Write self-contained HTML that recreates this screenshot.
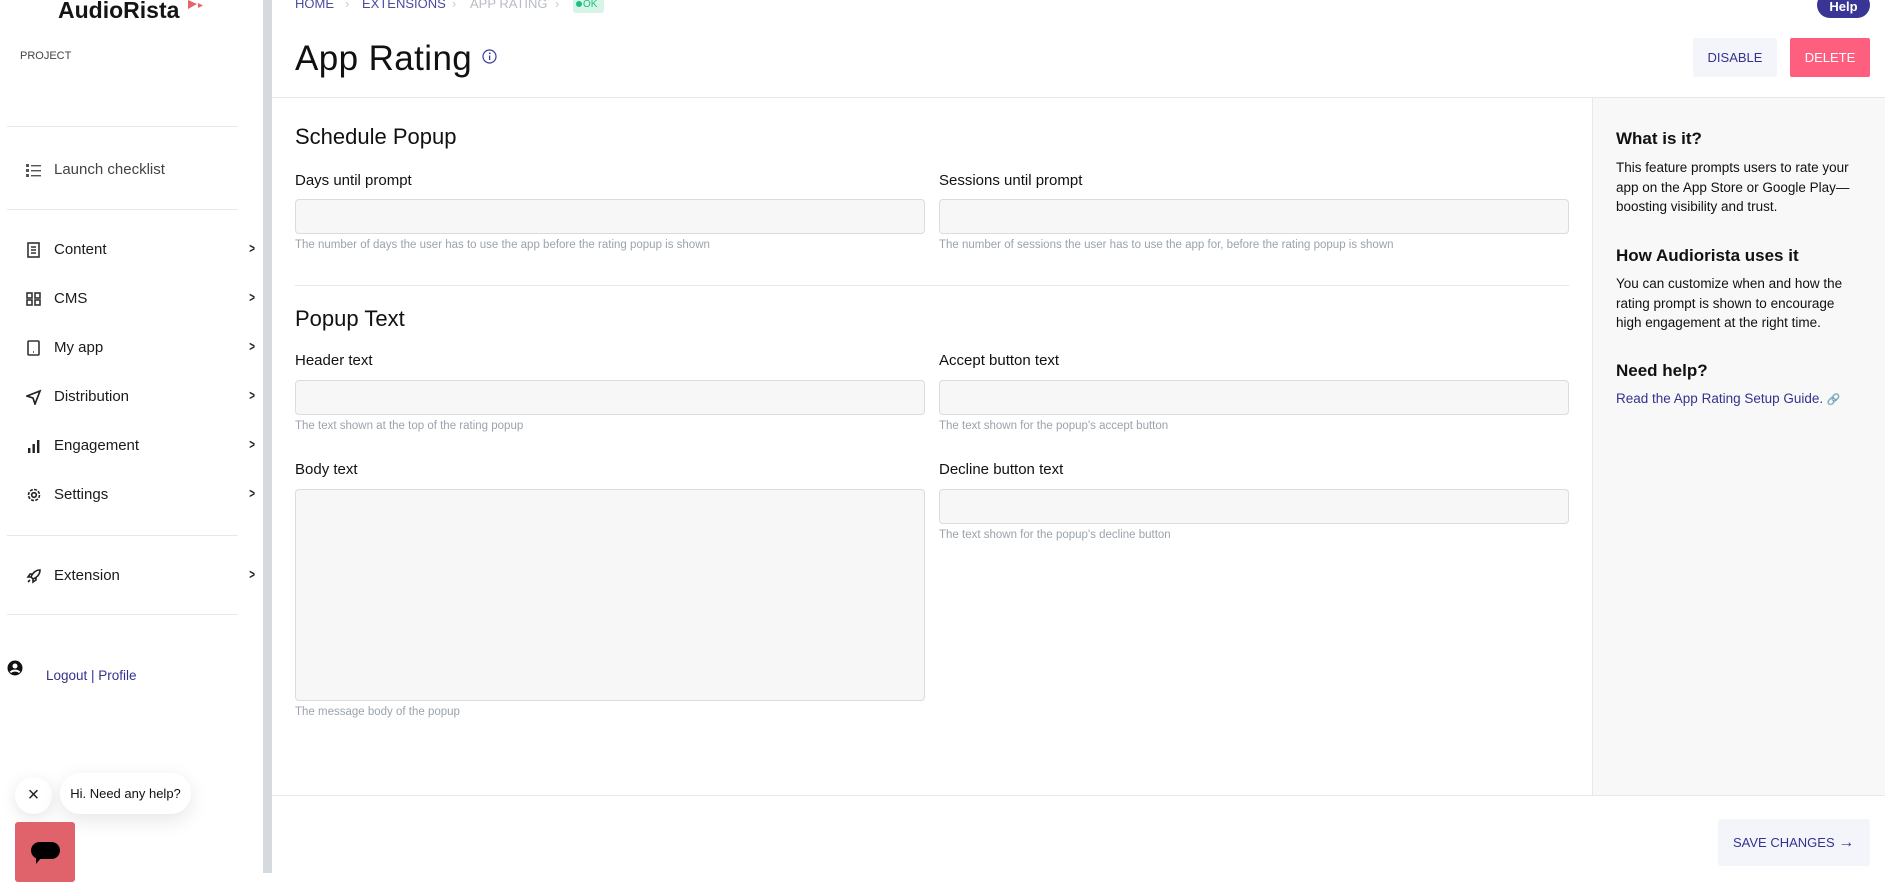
<!DOCTYPE html>
<html><head><meta charset="utf-8"><style>
*{box-sizing:border-box;margin:0;padding:0}
body{width:1885px;height:873px;overflow:hidden;background:#fff;font-family:"Liberation Sans",sans-serif;color:#111;position:relative}
.a{position:absolute;white-space:nowrap}
.hr{position:absolute;height:1px;background:#e6e8eb}
.nav{position:absolute;left:26px;width:236px;height:2px;font-size:15px;color:#1a1a1a;white-space:nowrap}
.nav svg{position:absolute;left:0;top:-8px}
.nav span{position:absolute;left:28px;top:-9px}
.chev{position:absolute;left:222px;font-size:14px;color:#222;top:-10px;transform:scaleX(.7);font-weight:bold}
.lbl{position:absolute;font-size:15px;color:#111}
.inp{position:absolute;background:#f7f7f7;border:1px solid #dcdcdc;border-radius:4px}
.hint{position:absolute;font-size:11.5px;color:#9ba3ab}
.rp h4{position:absolute;left:1616px;font-size:17px;font-weight:bold;color:#111}
.rp p{position:absolute;left:1616px;font-size:13.5px;line-height:19.5px;color:#111;width:238px}
</style></head><body>
<div class="a" style="left:58px;top:-3px;font-size:23px;font-weight:bold;color:#151515">AudioRista</div>
<svg class="a" style="left:188px;top:0" width="18" height="10"><polygon points="0,0 9,4 0,9" fill="#e8636c"/><polygon points="10,3 15,5.5 10,8" fill="#e8636c"/></svg>
<div class="a" style="left:20px;top:50px;font-size:11px;color:#444">PROJECT</div>
<div class="hr" style="left:7px;width:231px;top:126px"></div>
<div class="nav" style="top:170px"><svg width="16" height="16" viewBox="0 0 16 16" fill="#555"><rect x="0" y="2" width="3" height="3"/><rect x="0" y="7" width="3" height="3"/><rect x="0" y="12" width="3" height="3"/><rect x="5" y="3" width="10" height="1.4"/><rect x="5" y="8" width="10" height="1.4"/><rect x="5" y="13" width="10" height="1.4"/></svg><span style="color:#444">Launch checklist</span></div>
<div class="hr" style="left:7px;width:231px;top:209px"></div>
<div class="nav" style="top:250px"><svg width="16" height="16" viewBox="0 0 16 16" fill="none" stroke="#333" stroke-width="1.6"><rect x="2" y="1" width="11" height="14"/><path d="M5 5h5M5 8h5M5 11h5"/></svg><span>Content</span><b class="chev">&gt;</b></div>
<div class="nav" style="top:299px"><svg width="16" height="16" viewBox="0 0 16 16" fill="none" stroke="#333" stroke-width="1.6"><rect x="1" y="2" width="5" height="5"/><rect x="9" y="2" width="5" height="5"/><rect x="1" y="9" width="5" height="5"/><rect x="9" y="9" width="5" height="5"/></svg><span>CMS</span><b class="chev">&gt;</b></div>
<div class="nav" style="top:348px"><svg width="16" height="16" viewBox="0 0 16 16" fill="none" stroke="#333" stroke-width="1.6"><rect x="2" y="1" width="11" height="14" rx="1"/><path d="M7 12h1"/></svg><span>My app</span><b class="chev">&gt;</b></div>
<div class="nav" style="top:397px"><svg width="16" height="16" viewBox="0 0 16 16" fill="none" stroke="#222" stroke-width="1.7"><path d="M1 7L14 2L9 15L7 9Z"/></svg><span>Distribution</span><b class="chev">&gt;</b></div>
<div class="nav" style="top:446px"><svg width="16" height="16" viewBox="0 0 16 16" fill="#222"><rect x="2" y="10" width="2.4" height="5"/><rect x="6.5" y="6" width="2.4" height="9"/><rect x="11" y="2" width="2.4" height="13"/></svg><span>Engagement</span><b class="chev">&gt;</b></div>
<div class="nav" style="top:495px"><svg width="16" height="16" viewBox="0 0 16 16" fill="none" stroke="#222" stroke-width="1.6"><circle cx="8" cy="8" r="5.5" stroke-dasharray="3 1.3"/><circle cx="8" cy="8" r="2.3"/></svg><span>Settings</span><b class="chev">&gt;</b></div>
<div class="hr" style="left:7px;width:231px;top:535px"></div>
<div class="nav" style="top:576px"><svg width="16" height="16" viewBox="0 0 16 16" fill="none" stroke="#222" stroke-width="1.6"><path d="M14 2C9 2 6 6 5 9l2 2c3-1 7-4 7-9zM5 9L2 9 4 6h3M7 11v3l3-2v-3M4 12l-2 2"/></svg><span>Extension</span><b class="chev">&gt;</b></div>
<div class="hr" style="left:7px;width:231px;top:614px"></div>
<svg class="a" style="left:7px;top:660px" width="16" height="16" viewBox="0 0 16 16"><circle cx="8" cy="8" r="7.5" fill="#111"/><circle cx="8" cy="6" r="2.5" fill="#fff"/><path d="M3.5 12.5c1.5-2.5 7.5-2.5 9 0" stroke="#fff" stroke-width="2" fill="none"/></svg>
<div class="a" style="left:46px;top:668px;font-size:13.5px;color:#33338f">Logout | Profile</div>
<div class="a" style="left:15px;top:777px;width:37px;height:37px;border-radius:50%;background:#fff;box-shadow:0 4px 16px rgba(0,0,0,.1);font-size:20px;text-align:center;line-height:36px;color:#222">×</div>
<div class="a" style="left:60px;top:773px;width:131px;height:41px;border-radius:20px;background:#fff;box-shadow:0 6px 20px rgba(0,0,0,.1);font-size:13px;line-height:41px;text-align:center;color:#111">Hi. Need any help?</div>
<div class="a" style="left:15px;top:822px;width:60px;height:60px;background:#e0636b;border-radius:3px"><div style="position:absolute;left:16px;top:20px;width:29px;height:17px;background:#000;border-radius:9px"></div><div style="position:absolute;left:21px;top:36px;border-top:6px solid #000;border-right:5px solid transparent"></div></div>
<div class="a" style="left:263px;top:0;width:9px;height:873px;background:#d6d9dd"></div>
<div class="a" style="left:295px;top:-4px;font-size:13px;color:#4a4aa0">HOME</div>
<div class="a" style="left:345px;top:-4px;font-size:13px;color:#ccc">›</div>
<div class="a" style="left:362px;top:-4px;font-size:13px;color:#4a4aa0">EXTENSIONS</div>
<div class="a" style="left:452px;top:-4px;font-size:13px;color:#ccc">›</div>
<div class="a" style="left:470px;top:-4px;font-size:13px;color:#b8bcc4">APP RATING</div>
<div class="a" style="left:555px;top:-4px;font-size:13px;color:#ccc">›</div>
<div class="a" style="left:573px;top:-3px;width:31px;height:16px;background:#d6f5e8;border-radius:3px;font-size:10px;color:#1dbf7a;line-height:16px;padding-left:3px"><span style="display:inline-block;width:6px;height:6px;border-radius:50%;background:#1dbf7a;margin-right:1px"></span>OK</div>
<div class="a" style="left:1817px;top:-8px;width:53px;height:26px;background:#393594;border-radius:13px;color:#fff;font-size:13px;font-weight:bold;text-align:center;line-height:30px">Help</div>
<div class="a" style="left:295px;top:39px;font-size:35px;color:#111;letter-spacing:.4px">App Rating</div>
<svg class="a" style="left:482px;top:49px" width="15" height="15" viewBox="0 0 15 15"><circle cx="7.5" cy="7.5" r="6.5" fill="none" stroke="#3b3a9a" stroke-width="1.2"/><circle cx="7.8" cy="4.3" r=".9" fill="#3b3a9a"/><path d="M7.6 6.5v4.5" stroke="#3b3a9a" stroke-width="1.3"/></svg>
<div class="a" style="left:1693px;top:38px;width:84px;height:39px;background:#f4f5fa;border-radius:2px;color:#33338f;font-size:13px;text-align:center;line-height:39px">DISABLE</div>
<div class="a" style="left:1790px;top:38px;width:80px;height:39px;background:#fe5f7f;border-radius:2px;color:#fff;font-size:13px;text-align:center;line-height:39px">DELETE</div>
<div class="hr" style="left:272px;width:1613px;top:97px"></div>
<div class="a" style="left:1592px;top:98px;width:293px;height:697px;background:#f8f8f8;border-left:1px solid #e8e8e8"></div>
<div class="rp">
<h4 style="top:129px">What is it?</h4>
<p style="top:158px">This feature prompts users to rate your app on the App Store or Google Play—boosting visibility and trust.</p>
<h4 style="top:246px">How Audiorista uses it</h4>
<p style="top:274px">You can customize when and how the rating prompt is shown to encourage high engagement at the right time.</p>
<h4 style="top:361px">Need help?</h4>
<p style="top:389px;color:#33338f;width:260px">Read the App Rating Setup Guide. <span style="color:#aaa;font-size:11px">🔗</span></p>
</div>
<div class="a" style="left:295px;top:124px;font-size:22px">Schedule Popup</div>
<div class="lbl" style="left:295px;top:172px">Days until prompt</div>
<div class="lbl" style="left:939px;top:172px">Sessions until prompt</div>
<div class="inp" style="left:295px;top:199px;width:630px;height:35px"></div>
<div class="inp" style="left:939px;top:199px;width:630px;height:35px"></div>
<div class="hint" style="left:295px;top:239px">The number of days the user has to use the app before the rating popup is shown</div>
<div class="hint" style="left:939px;top:239px">The number of sessions the user has to use the app for, before the rating popup is shown</div>
<div class="hr" style="left:295px;width:1274px;top:285px"></div>
<div class="a" style="left:295px;top:306px;font-size:22px">Popup Text</div>
<div class="lbl" style="left:295px;top:352px">Header text</div>
<div class="lbl" style="left:939px;top:352px">Accept button text</div>
<div class="inp" style="left:295px;top:380px;width:630px;height:35px"></div>
<div class="inp" style="left:939px;top:380px;width:630px;height:35px"></div>
<div class="hint" style="left:295px;top:420px">The text shown at the top of the rating popup</div>
<div class="hint" style="left:939px;top:420px">The text shown for the popup's accept button</div>
<div class="lbl" style="left:295px;top:461px">Body text</div>
<div class="lbl" style="left:939px;top:461px">Decline button text</div>
<div class="inp" style="left:295px;top:489px;width:630px;height:212px"></div>
<div class="inp" style="left:939px;top:489px;width:630px;height:35px"></div>
<div class="hint" style="left:939px;top:529px">The text shown for the popup's decline button</div>
<div class="hint" style="left:295px;top:706px">The message body of the popup</div>
<div class="hr" style="left:272px;width:1613px;top:795px"></div>
<div class="a" style="left:1718px;top:819px;width:152px;height:47px;background:#f4f5fa;border-radius:3px;color:#33338f;font-size:13px;line-height:47px;padding-left:15px">SAVE CHANGES <span style="font-size:16px">→</span></div>
</body></html>
